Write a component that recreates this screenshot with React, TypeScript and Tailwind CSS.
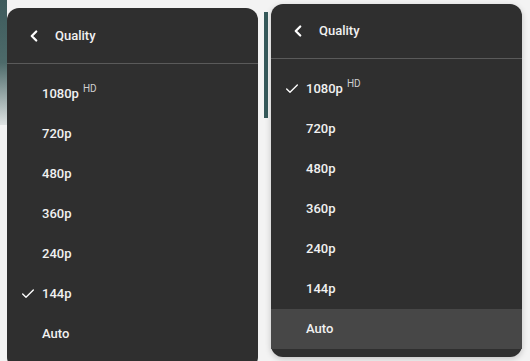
import { Check, ChevronLeft } from 'lucide-react';

type Option = { label: string; hd?: boolean };

const options: Option[] = [
  { label: '1080p', hd: true },
  { label: '720p' },
  { label: '480p' },
  { label: '360p' },
  { label: '240p' },
  { label: '144p' },
  { label: 'Auto' },
];

/** Menu de qualidade do player, com item marcado e item em hover. */
function QualityMenu({ selected, hovered, className }: { selected: string; hovered?: string; className?: string }) {
  return (
    <div className={`flex w-[251px] shrink-0 flex-col rounded-[12px] bg-[#2f2f2f] pb-[8px] text-[#f1f1f1] ${className ?? ''}`}>
      <div className="flex h-[56px] items-center border-b border-[#5a5a5a] pl-[18px]">
        <ChevronLeft size={18} strokeWidth={3} className="text-white" />
        <span className="ml-[12px] text-[13px] font-medium">Quality</span>
      </div>
      <div className="pt-[10px]">
        {options.map((o) => (
          <div
            key={o.label}
            className={`flex h-[40px] items-center pl-[13px] ${hovered === o.label ? 'bg-[#474747]' : ''}`}
          >
            <span className="flex w-[22px] items-center">
              {selected === o.label && <Check size={16} strokeWidth={2} className="text-white" />}
            </span>
            <span className="text-[13px] font-medium">{o.label}</span>
            {o.hd && <span className="ml-[4px] -translate-y-[6px] text-[10px] text-[#d0d0d0]">HD</span>}
          </div>
        ))}
      </div>
    </div>
  );
}

export default function App() {
  return (
    <div className="flex h-[361px] w-[530px] overflow-hidden bg-[#f3f3f3] font-['Roboto',sans-serif]">
      <div className="h-[125px] w-[7px] shrink-0 bg-gradient-to-b from-[#3e5b5c] via-[#4d6a6a] to-[#dfe3e3]" />
      <QualityMenu selected="144p" className="mt-[8px] h-[361px]" />
      <div className="flex w-[13px] shrink-0 pl-[6px]">
        <div className="mt-[12px] h-[106px] w-[4px] bg-[#35595a]" />
      </div>
      <QualityMenu selected="1080p" hovered="Auto" className="mt-[4px] h-[353px] shadow-[0_2px_6px_rgba(0,0,0,0.2)]" />
    </div>
  );
}
